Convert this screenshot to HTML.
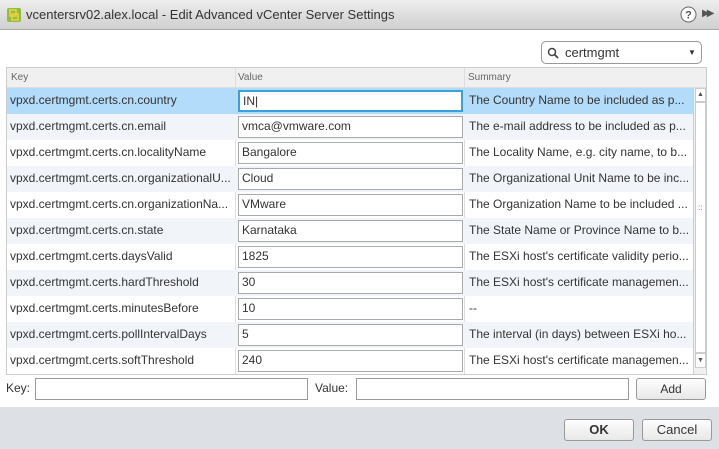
<!DOCTYPE html><html><head><style>
*{box-sizing:border-box;margin:0;padding:0}
body{width:719px;height:449px;overflow:hidden;background:#fff;font-family:"Liberation Sans",Arial,sans-serif;font-size:12px;color:#333;position:relative}
.abs{position:absolute}
.title{left:0;top:0;width:719px;height:30px;background:linear-gradient(#eeeeee,#cfcfcf);border-bottom:1px solid #aaa}
.title span{position:absolute;left:26px;top:7px;font-size:13px;color:#333}
.row{position:absolute;left:7px;width:686px;height:26px}
.row div{position:absolute;top:0;height:26px;line-height:24px;white-space:nowrap;overflow:hidden}
.k{left:3px;width:225px}
.v{left:231px;top:2px!important;height:22px!important;width:225px;border:1px solid #aaa;background:#fff;padding-left:3px;line-height:19px!important}
.s{left:462px;width:224px}
.btn{position:absolute;border:1px solid #999;border-radius:3px;background:linear-gradient(#fdfdfd,#e8e8e8);text-align:center;font-size:12px;color:#333}
.inp{position:absolute;border:1px solid #999;background:#fff;height:22px}
</style></head><body>
<div class="abs title"><svg class="abs" style="left:6px;top:7px" width="16" height="16"><rect x="1" y="1" width="14" height="14" rx="2" fill="#8cbf3f"/><rect x="4" y="3" width="6" height="6" fill="none" stroke="#f4d03f" stroke-width="1.5"/><rect x="6" y="7" width="6" height="6" fill="none" stroke="#f4d03f" stroke-width="1.5"/></svg><span>vcentersrv02.alex.local - Edit Advanced vCenter Server Settings</span>
<svg class="abs" style="left:680px;top:6px" width="17" height="17"><circle cx="8.5" cy="8.5" r="7.5" fill="#fff" stroke="#666"/><text x="8.5" y="12.5" font-size="11" font-weight="bold" text-anchor="middle" fill="#555" font-family="Liberation Sans">?</text></svg>
<div class="abs" style="left:702px;top:8px;font-size:10px;color:#555;letter-spacing:-3px">▶▶</div></div>
<div class="abs" style="left:541px;top:41px;width:161px;height:23px;border:1px solid #999;border-radius:5px;background:#fff">
<svg class="abs" style="left:5px;top:5px" width="12" height="12"><circle cx="5" cy="5" r="3.5" fill="none" stroke="#444" stroke-width="1.5"/><line x1="7.5" y1="7.5" x2="11" y2="11" stroke="#444" stroke-width="1.8"/></svg>
<span class="abs" style="left:23px;top:3px;font-size:13px">certmgmt</span><span class="abs" style="left:146px;top:6px;font-size:8px">▼</span></div>
<div class="abs" style="left:6px;top:67px;width:701px;height:308px;border:1px solid #ccc"></div>
<div class="abs" style="left:7px;top:68px;width:699px;height:20px;background:#f0f0f0;border-bottom:1px solid #ddd;font-size:10px;color:#666">
<span class="abs" style="left:4px;top:4px">Key</span><span class="abs" style="left:231px;top:4px">Value</span><span class="abs" style="left:461px;top:4px">Summary</span>
<div class="abs" style="left:228px;top:0;width:1px;height:20px;background:#ddd"></div><div class="abs" style="left:457px;top:0;width:1px;height:20px;background:#ddd"></div></div>
<div class="abs" style="left:235px;top:88px;width:1px;height:286px;background:#ddd"></div>
<div class="abs" style="left:464px;top:88px;width:1px;height:286px;background:#ddd"></div>
<div class="abs" style="left:693px;top:88px;width:13px;height:286px;background:#f0f0f0;border-left:1px solid #ccc">
<div class="abs" style="left:1px;top:0;width:11px;height:14px;background:#fff;border:1px solid #ccc;font-size:7px;text-align:center;line-height:12px;color:#555">▲</div>
<div class="abs" style="left:1px;top:14px;width:11px;height:251px;background:#fff;border:1px solid #ccc"></div>
<div class="abs" style="left:4px;top:115px;font-size:8px;color:#666">::</div>
<div class="abs" style="left:1px;top:265px;width:11px;height:15px;background:#fff;border:1px solid #ccc;font-size:7px;text-align:center;line-height:13px;color:#555">▼</div></div>
<div class="row" style="top:88px;background:#b3dcfa"><div class="k">vpxd.certmgmt.certs.cn.country</div><div class="v" style="border:2px solid #3aa0dc">IN|</div><div class="s">The Country Name to be included as p...</div></div>
<div class="row" style="top:114px;background:#f1f5fa"><div class="k">vpxd.certmgmt.certs.cn.email</div><div class="v">vmca@vmware.com</div><div class="s">The e-mail address to be included as p...</div></div>
<div class="row" style="top:140px"><div class="k">vpxd.certmgmt.certs.cn.localityName</div><div class="v">Bangalore</div><div class="s">The Locality Name, e.g. city name, to b...</div></div>
<div class="row" style="top:166px;background:#f1f5fa"><div class="k">vpxd.certmgmt.certs.cn.organizationalU...</div><div class="v">Cloud</div><div class="s">The Organizational Unit Name to be inc...</div></div>
<div class="row" style="top:192px"><div class="k">vpxd.certmgmt.certs.cn.organizationNa...</div><div class="v">VMware</div><div class="s">The Organization Name to be included ...</div></div>
<div class="row" style="top:218px;background:#f1f5fa"><div class="k">vpxd.certmgmt.certs.cn.state</div><div class="v">Karnataka</div><div class="s">The State Name or Province Name to b...</div></div>
<div class="row" style="top:244px"><div class="k">vpxd.certmgmt.certs.daysValid</div><div class="v">1825</div><div class="s">The ESXi host's certificate validity perio...</div></div>
<div class="row" style="top:270px;background:#f1f5fa"><div class="k">vpxd.certmgmt.certs.hardThreshold</div><div class="v">30</div><div class="s">The ESXi host's certificate managemen...</div></div>
<div class="row" style="top:296px"><div class="k">vpxd.certmgmt.certs.minutesBefore</div><div class="v">10</div><div class="s">--</div></div>
<div class="row" style="top:322px;background:#f1f5fa"><div class="k">vpxd.certmgmt.certs.pollIntervalDays</div><div class="v">5</div><div class="s">The interval (in days) between ESXi ho...</div></div>
<div class="row" style="top:348px;height:26px"><div class="k">vpxd.certmgmt.certs.softThreshold</div><div class="v">240</div><div class="s">The ESXi host's certificate managemen...</div></div>
<span class="abs" style="left:6px;top:381px">Key:</span><div class="inp" style="left:35px;top:378px;width:273px"></div>
<span class="abs" style="left:315px;top:381px">Value:</span><div class="inp" style="left:356px;top:378px;width:273px"></div>
<div class="btn" style="left:636px;top:378px;width:70px;height:22px;line-height:20px">Add</div>
<div class="abs" style="left:0;top:407px;width:719px;height:42px;background:#dde1e6"></div>
<div class="btn" style="left:564px;top:419px;width:70px;height:22px;line-height:20px;font-weight:bold;font-size:13px">OK</div>
<div class="btn" style="left:642px;top:419px;width:70px;height:22px;line-height:20px;font-size:13px">Cancel</div>
</body></html>
